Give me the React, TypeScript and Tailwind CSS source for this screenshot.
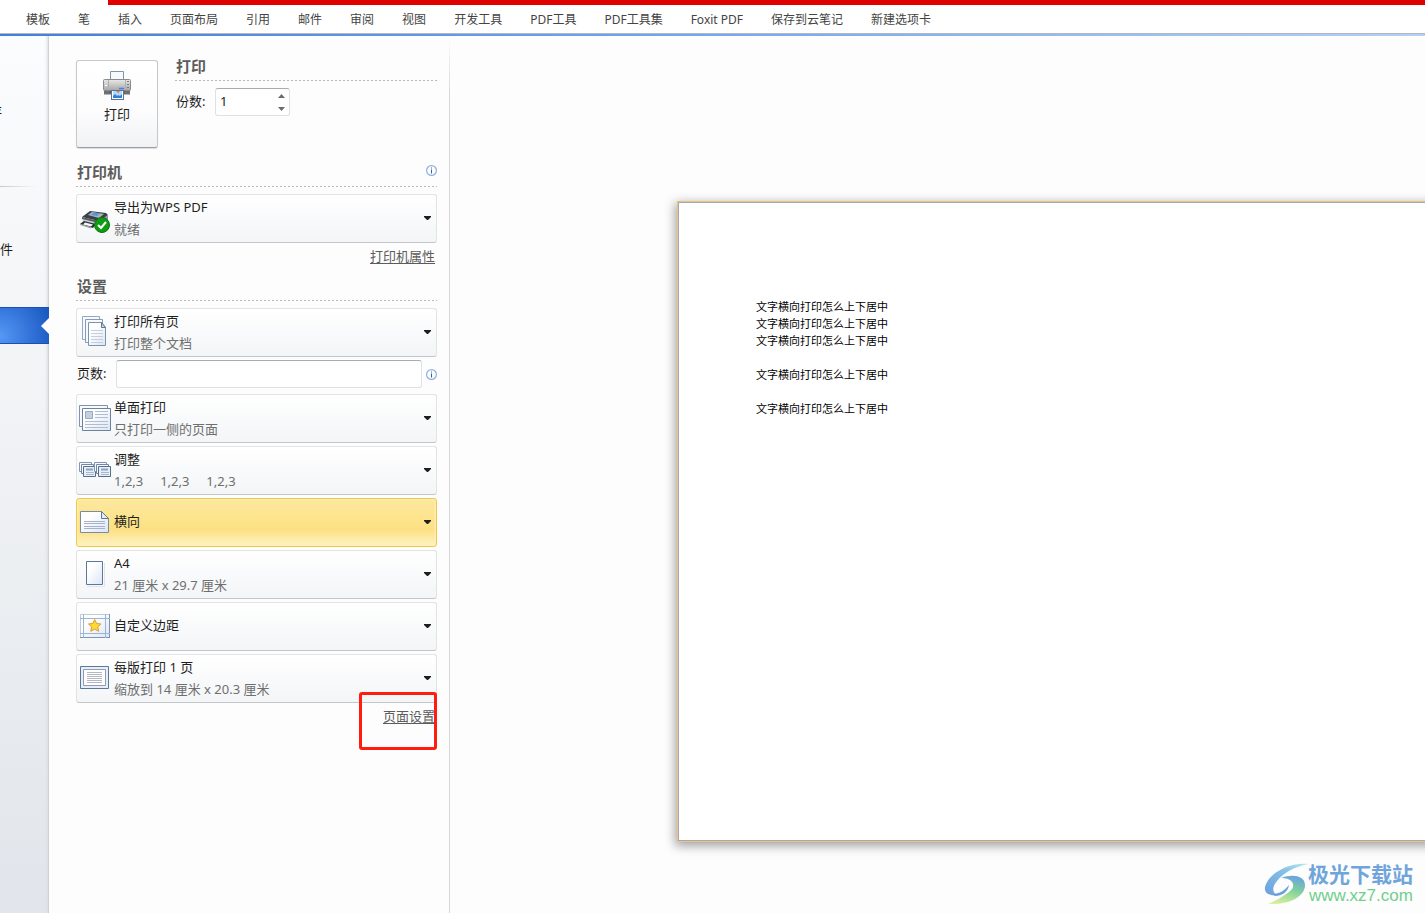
import { useState } from "react";
import type { ReactNode } from "react";

const TABS = [
  "模板", "笔", "插入", "页面布局", "引用", "邮件", "审阅", "视图", "开发工具",
  "PDF工具", "PDF工具集", "Foxit PDF", "保存到云笔记", "新建选项卡",
];

const PREVIEW_LINES = [
  "文字横向打印怎么上下居中",
  "文字横向打印怎么上下居中",
  "文字横向打印怎么上下居中",
  "",
  "文字横向打印怎么上下居中",
  "",
  "文字横向打印怎么上下居中",
];

function PrinterIcon() {
  return (
    <svg width="32" height="32" viewBox="0 0 32 32" aria-hidden="true">
      <defs>
        <linearGradient id="body" x1="0" y1="0" x2="0" y2="1">
          <stop offset="0" stopColor="#e9e9e9" />
          <stop offset="1" stopColor="#a6a6a8" />
        </linearGradient>
      </defs>
      <path d="M9.5 11V2.5h13V11" fill="#f7fafd" stroke="#8494a8" />
      <path d="M3 20h26v5.500H3z" fill="#707073" />
      <path d="M8.500 20h15v4h-15z" fill="#58585b" />
      <rect x="2.5" y="10.5" width="27" height="11" rx="1" fill="url(#body)" stroke="#8a8a8d" />
      <path d="M7.500 11v10M24.500 11v10" stroke="#b0b0b3" />
      <path d="M4 16.500h2" stroke="#fff" />
      <path d="M26 12.500h2M26 15.500h2M26 18.500h2" stroke="#77787c" />
      <path d="M18 19.500h5" stroke="#3d86e8" strokeWidth="1.500" />
      <rect x="10.500" y="21.500" width="12" height="9" fill="#fff" stroke="#5d7494" />
      <rect x="12" y="22" width="9" height="7" fill="#b3dcfb" />
      <path d="M12 29v-2l2-2 2 2 1-1 2 1 2-2v4z" fill="#2f7fd4" />
      <path d="M15 22l2 2.500 2-2.500z" fill="#ef7b4d" />
    </svg>
  );
}

function RowIcon({ children }: { children: ReactNode }) {
  return (
    <svg
      width="36"
      height="47"
      viewBox="0 0 36 47"
      aria-hidden="true"
      className="pointer-events-none col-start-1 row-start-1"
      fill="#f6f9fd"
      stroke="#66809f"
    >
      <defs>
        <linearGradient id="sheet" x1="0" y1="0" x2="1" y2="1">
          <stop offset="0.3" stopColor="#ffffff" />
          <stop offset="1" stopColor="#dbe5f5" />
        </linearGradient>
      </defs>
      {children}
    </svg>
  );
}

const deviceIcon = (
  <RowIcon>
    <g stroke="none">
      <path d="M13 16l16 2 2 2-9 7L5 22z" fill="#3a4046" />
      <path d="M5 22l17 4v6L6 27z" fill="#c9ced4" />
      <path d="M5 22l17 4v2L5 24z" fill="#565d65" />
      <path d="M22 26l9-6v5l-9 7z" fill="#8e959d" />
      <path d="M11 20l4-3 12 2-5 4z" fill="#aab2bb" />
      <path d="M14 20l3-2.500 6 1-3 2.500z" fill="#5b95d6" />
      <path d="M7 26l12 3-3 4-13-4z" fill="#2b3035" />
      <path d="M8 27.500l8 2-2 2-8-2z" fill="#f4f6f8" />
      <path d="M3 29l11 3v1.500L3 30z" fill="#9aa1a9" />
    </g>
    <circle cx="25" cy="30" r="7.500" fill="#0d9c12" stroke="#0a7310" />
    <path d="M21 30l3 3 5-6" fill="none" stroke="#fff" strokeWidth="2" />
  </RowIcon>
);

const pagesIcon = (
  <RowIcon>
    <path d="M5.500 7.500h17v23h-17z" stroke="#93a8c1" />
    <path d="M8.500 10.500h17v23h-17z" stroke="#849bb7" />
    <path d="M11.500 13.500h13l4 5v18h-17z" fill="url(#sheet)" stroke="#7c93ae" />
    <path d="M24.500 13.500v5h4z" fill="#c9d6e6" stroke="#5d7897" />
    <path d="M14 21.500h12M14 24.500h12M14 27.500h12M14 30.500h12M14 33.500h12" stroke="#c3cddc" />
  </RowIcon>
);

const oneSidedIcon = (
  <RowIcon>
    <path d="M2.500 10.500h28v21h-28z" stroke="#7d93af" />
    <path d="M5.500 13.500h28v22h-28z" fill="url(#sheet)" stroke="#6a829f" />
    <path d="M8.500 16.500h7v7h-7z" fill="#c3cfe2" stroke="#9aabc6" />
    <path d="M18 16.500h13M18 19.500h13M18 22.500h13M8 26.500h23M8 29.500h23M8 32.500h23" stroke="#b1bed1" />
  </RowIcon>
);

const collateIcon = (
  <RowIcon>
    {[0, 15].map((dx) => (
      <g key={dx} transform={`translate(${dx} 0)`}>
        <path d="M2.500 15.500h12v9h-12z" stroke="#8399b3" />
        <path d="M4.500 17.500h12v9h-12z" stroke="#7189a6" />
        <path d="M6.500 19.500h12v10h-12z" fill="#e9eff8" stroke="#566f8e" />
        <path d="M9 22.500h7" stroke="#8fa3bd" strokeWidth="2" />
        <path d="M9 25.500h8M9 27.500h8" stroke="#a9b7cc" />
      </g>
    ))}
  </RowIcon>
);

const landscapeIcon = (
  <RowIcon>
    <path d="M3.500 12.500h21l7 7v14h-28z" fill="url(#sheet)" stroke="#7a8ca5" />
    <path d="M24.500 12.500v7h7z" fill="#e3ebf6" stroke="#5d7897" />
    <path d="M7 22.500h21M7 24.500h21M7 27.500h21M7 29.500h21" stroke="#a3b2d2" />
  </RowIcon>
);

const paperIcon = (
  <RowIcon>
    <path d="M10 35.500h17.500V12" fill="none" stroke="#e1e4e8" />
    <path d="M9.500 10.500h16v23h-16z" fill="url(#sheet)" stroke="#5d7897" />
  </RowIcon>
);

const marginsIcon = (
  <RowIcon>
    <path d="M3.500 11.500h29v23h-29z" fill="url(#sheet)" stroke="#c0cad9" />
    <path d="M32.500 11v24M3 34.500h30" stroke="#7e94b0" />
    <path d="M6.500 11v24M28.500 11v24M3 15.500h30M3 30.500h30" stroke="#9db4d4" />
    <path
      d="M17.700 16.500l1.900 4 4.300.5-3.200 3 .9 4.300-3.900-2.200-3.900 2.200.9-4.300-3.200-3 4.300-.5z"
      fill="#ffd83a"
      stroke="#dd9f25"
    />
  </RowIcon>
);

const perSheetIcon = (
  <RowIcon>
    <path d="M3.500 11.500h28v22h-28z" fill="#e8eef8" stroke="#5d7897" />
    <path d="M6.500 14.500h22v16h-22z" fill="#fff" stroke="#8d9db5" />
    <path d="M10 17.500h15M10 19.500h15M10 21.500h15M10 23.500h15M10 25.500h15M10 27.500h15" stroke="#b5b8be" />
  </RowIcon>
);

type OptionProps = {
  label: string;
  title: string;
  detail?: string;
  icon: ReactNode;
  active?: boolean;
};

function OptionSelect({ label, title, detail, icon, active }: OptionProps) {
  const skin = active
    ? "border-[#efc84a] bg-[linear-gradient(#fbe7a0,#fde58f_35%,#fce083_65%,#fef3c4)] shadow-[inset_0_0_2px_1px_#fff0b8]"
    : "border-[#e1e3e5] border-b-[#c3c6ca] bg-linear-to-b from-white to-[#f3f5f7]";
  return (
    <div className={`grid h-[49px] grid-cols-[minmax(0,1fr)] rounded-[3px] border ${skin}`}>
      <select
        aria-label={label}
        className={`col-start-1 row-start-1 h-full w-full appearance-none bg-transparent pl-[37px] text-[13px] text-[#1e1e1e] outline-none ${detail ? "pb-[22px]" : "pb-[2px]"}`}
      >
        <option>{title}</option>
      </select>
      {icon}
      {detail && (
        <span className="pointer-events-none col-start-1 row-start-1 self-end whitespace-pre pb-[3px] pl-[37px] text-[13px] leading-5 text-[#6f6f6f]">
          {detail}
        </span>
      )}
      <svg
        width="7"
        height="4"
        viewBox="0 0 7 4"
        aria-hidden="true"
        className="pointer-events-none col-start-1 row-start-1 mr-[5px] mb-[2px] self-center justify-self-end"
      >
        <path d="M0 0h7v1L4 4H3L0 1z" fill="#1e1e1e" />
      </svg>
    </div>
  );
}

function InfoIcon() {
  return (
    <svg width="11" height="11" viewBox="0 0 11 11" role="img" aria-label="信息" className="shrink-0">
      <circle cx="5.500" cy="5.500" r="4.900" fill="#fdfeff" stroke="#8fb0e2" strokeWidth="1.200" />
      <path d="M5 2.500h1v1H5zM5 4.500h1v4H5z" fill="#3b5f9b" />
    </svg>
  );
}

function Heading({ children, info }: { children: ReactNode; info?: boolean }) {
  return (
    <div>
      <div className="flex items-start justify-between pb-1 pl-px">
        <h2 className="text-[15px] leading-5 font-bold text-[#5c5c5c]">{children}</h2>
        {info && (
          <span className="pt-[3px]">
            <InfoIcon />
          </span>
        )}
      </div>
      <div className="h-px bg-[repeating-linear-gradient(90deg,#b9b9b9_0_2px,transparent_2px_4px)]" />
    </div>
  );
}

function SideNav() {
  return (
    <nav className="flex w-[49px] shrink-0 flex-col border-r border-[#cfd1d5] bg-[linear-gradient(#fafcfe,#f2f4f6_38%,#e1e5eb)] text-[13px] leading-5 text-[#1e1e1e] shadow-[inset_-3px_0_3px_-2px_#d9dce0]">
      <a href="#save" className="mt-[65px] flex w-[2px] justify-end overflow-hidden">
        <span>存</span>
      </a>
      <div className="mt-[65px] h-px w-9 bg-linear-to-r from-[#c4c7cb] to-transparent" />
      <a href="#file" className="mt-[52px]">
        件
      </a>
      <a
        href="#print"
        aria-label="打印"
        className="mt-12 -mr-px flex h-[37px] items-center justify-end border-y border-[#1c4fae] bg-[radial-gradient(circle_at_0_80%,#5598f5,#2f6fd6_60%,#1657bd)]"
      >
        <svg width="8" height="16" viewBox="0 0 8 16" aria-hidden="true">
          <path d="M8 0v16L0 8z" fill="#fff" />
        </svg>
      </a>
    </nav>
  );
}

function CopiesField() {
  const [copies, setCopies] = useState(1);
  return (
    <div className="mt-[7px] flex items-center pl-px">
      <label htmlFor="copies" className="w-[39px] pb-[2px] text-[13px] leading-5">
        份数:
      </label>
      <div className="flex h-7 w-[75px] rounded-[3px] border border-[#dfe1e6] border-t-[#a9abae] bg-white">
        <input
          id="copies"
          type="text"
          inputMode="numeric"
          value={copies}
          onChange={(e) => setCopies(Number(e.target.value) || 1)}
          className="min-w-0 flex-1 bg-transparent pl-[4px] text-[13px] outline-none"
        />
        <div className="flex w-4 flex-col">
          <button type="button" aria-label="增加" onClick={() => setCopies(copies + 1)} className="flex flex-1 items-center justify-center">
            <svg width="7" height="4" viewBox="0 0 7 4" aria-hidden="true">
              <path d="M0 4h7L3.500 0z" fill="#6b6b6b" />
            </svg>
          </button>
          <button type="button" aria-label="减少" onClick={() => setCopies(Math.max(1, copies - 1))} className="flex flex-1 items-center justify-center">
            <svg width="7" height="4" viewBox="0 0 7 4" aria-hidden="true">
              <path d="M0 0h7L3.500 4z" fill="#6b6b6b" />
            </svg>
          </button>
        </div>
      </div>
    </div>
  );
}

function PrintPanel() {
  return (
    <section className="flex w-[401px] shrink-0 flex-col bg-[linear-gradient(#fdfdfd,#d6d6d8_60px)] pr-px text-[#1e1e1e]">
      <div className="flex-1 bg-[#fdfdfd] pt-6 pr-3 pl-[27px]">
        <div className="flex gap-[17px]">
          <button
            type="button"
            className="flex h-[88px] w-[82px] flex-col items-center rounded-[3px] border border-[#c6c8cb] border-b-[#9b9da0] bg-[linear-gradient(#ffffff,#fcfcfd_60%,#f0f2f4)] pt-[8px] text-[13px] leading-5 shadow-[0_1px_1px_#dcdddf]"
          >
            <PrinterIcon />
            <span className="mt-[3px]">打印</span>
          </button>
          <div className="-mt-1 flex-1">
            <Heading>打印</Heading>
            <CopiesField />
          </div>
        </div>

        <div className="mt-[14px]">
          <Heading info>打印机</Heading>
        </div>
        <div className="mt-[7px]">
          <OptionSelect label="打印机" title="导出为WPS PDF" detail="就绪" icon={deviceIcon} />
        </div>
        <div className="mt-[3px] flex justify-end pr-[2px]">
          <a href="#printer-properties" className="text-[13px] leading-5 text-[#5c5c5c] underline underline-offset-2">
            打印机属性
          </a>
        </div>

        <div className="mt-[10px]">
          <Heading>设置</Heading>
        </div>
        <div className="mt-[7px] flex flex-col gap-[3px]">
          <OptionSelect label="打印范围" title="打印所有页" detail="打印整个文档" icon={pagesIcon} />
          <div className="mb-[3px] flex items-center pl-px">
            <label htmlFor="pages" className="w-[39px] pb-[2px] text-[13px] leading-5">
              页数:
            </label>
            <input
              id="pages"
              type="text"
              className="mr-1 h-7 min-w-0 flex-1 rounded-[3px] border border-[#dfe1e6] border-t-[#a9abae] bg-white px-1 text-[13px] outline-none"
            />
            <InfoIcon />
          </div>
          <OptionSelect label="单双面" title="单面打印" detail="只打印一侧的页面" icon={oneSidedIcon} />
          <OptionSelect label="调整顺序" title="调整" detail="1,2,3     1,2,3     1,2,3" icon={collateIcon} />
          <OptionSelect label="纸张方向" title="横向" icon={landscapeIcon} active />
          <OptionSelect label="纸张大小" title="A4" detail="21 厘米 x 29.7 厘米" icon={paperIcon} />
          <OptionSelect label="页边距" title="自定义边距" icon={marginsIcon} />
          <OptionSelect label="每版页数" title="每版打印 1 页" detail="缩放到 14 厘米 x 20.3 厘米" icon={perSheetIcon} />
        </div>
        <div className="relative mt-[3px] flex justify-end pr-[2px]">
          <a href="#page-setup" className="text-[13px] leading-5 text-[#5c5c5c] underline underline-offset-2">
            页面设置
          </a>
          <div className="pointer-events-none absolute -top-[14px] right-0 h-[58px] w-[78px] rounded-[3px] border-3 border-[#ff1d10]" />
        </div>
      </div>
    </section>
  );
}

function Preview() {
  return (
    <main className="flex min-w-0 flex-1 overflow-hidden bg-[#fdfdfd] pt-[165px] pb-[71px] pl-[227px]">
      <div className="-mr-3 flex flex-1 border border-[#eec083] shadow-[-1px_3px_10px_1px_rgba(0,0,0,0.36)]">
        <article className="flex-1 border border-[#a4a9b2] bg-white pt-[96px] pl-[77px] font-['Liberation_Serif','Noto_Sans_CJK_SC',serif] text-[11px] leading-[17px] text-black">
          {PREVIEW_LINES.map((line, i) => (
            <p key={i} className="min-h-[17px] whitespace-nowrap">
              {line}
            </p>
          ))}
        </article>
      </div>
    </main>
  );
}

function Watermark() {
  return (
    <div className="pointer-events-none absolute right-3 bottom-[7px] flex items-center">
      <svg width="44" height="42" viewBox="0 0 44 42" aria-hidden="true">
        <defs>
          <linearGradient id="swooshBlue" x1="1" y1="0" x2="0" y2="1">
            <stop offset="0" stopColor="#b8ecec" />
            <stop offset="0.4" stopColor="#86bfe8" />
            <stop offset="1" stopColor="#6b9fdc" />
          </linearGradient>
          <linearGradient id="swooshGreen" x1="0.6" y1="0" x2="0.3" y2="1">
            <stop offset="0" stopColor="#6ba4de" />
            <stop offset="0.45" stopColor="#7fd29b" />
            <stop offset="1" stopColor="#d9ef9a" />
          </linearGradient>
        </defs>
        <path d="M44 1C27-1 5 9 1 24c-1 6 4 9 12 8-5-3-5-8 0-14C20 9 31 4 44 1z" fill="url(#swooshBlue)" />
        <path d="M17 15c10-4 24-3 24 7 0 11-14 20-37 19 7-3 13-6 18-10 5-3 8-6 7-10-1-4-6-6-12-6z" fill="url(#swooshGreen)" />
        <path d="M8 31c8 0 13-4 17-9-1 7-7 11-14 11z" fill="#6b9fdc" />
      </svg>
      <div className="whitespace-nowrap">
        <div className="text-[21px] leading-6 font-bold text-[#70a5dc]">极光下载站</div>
        <div className="pl-px font-['Liberation_Sans',sans-serif] text-[17px] leading-5 text-[#70cf8b]">www.xz7.com</div>
      </div>
    </div>
  );
}

export default function App() {
  return (
    <div className="relative flex min-h-screen flex-col overflow-hidden bg-[#fdfdfd] font-['Noto_Sans','Noto_Sans_CJK_SC',sans-serif]">
      <header className="bg-white">
        <div className="ml-[108px] h-[5px] bg-[#df0000]" />
        <div className="flex h-7 items-center gap-7 pt-[2px] pl-[26px]">
          {TABS.map((tab) => (
            <button key={tab} type="button" className="text-xs leading-5 whitespace-nowrap text-[#444444]">
              {tab}
            </button>
          ))}
        </div>
        <div className="h-[3px] border-t border-[#b4b7bc] bg-linear-to-r from-[#3f80dc] via-[#74a8f0] to-[#b3d0f5]" />
      </header>
      <div className="flex flex-1">
        <SideNav />
        <PrintPanel />
        <Preview />
      </div>
      <Watermark />
    </div>
  );
}
